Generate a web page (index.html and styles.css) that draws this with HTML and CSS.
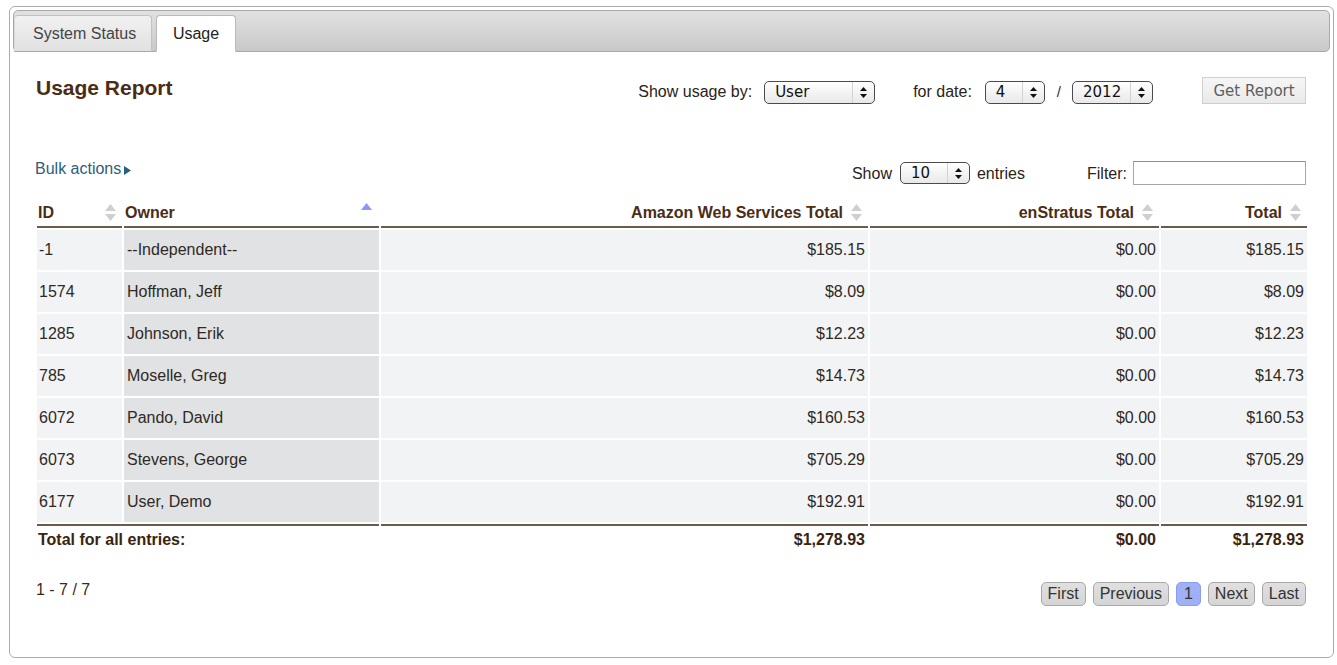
FILE: index.html
```html
<!DOCTYPE html>
<html>
<head>
<meta charset="utf-8">
<title>Usage Report</title>
<link rel="stylesheet" href="styles.css">
</head>
<body>
<div class="panel">
  <div class="tabbar">
    <div class="tab">System Status</div>
    <div class="tab active">Usage</div>
  </div>
  <div class="content">
    <div class="report-head">
      <h1 class="title">Usage Report</h1>
      <div class="controls">
        <span class="label">Show usage by:</span>
        <span class="select sel-user"><span class="val">User</span><span class="arrows"><svg width="7" height="11" viewBox="0 0 7 11"><path d="M3.5 0 L7 4 L0 4 Z M0 7 L7 7 L3.5 11 Z" fill="#111"/></svg></span></span>
        <span class="label label-date">for date:</span>
        <span class="select sel-month"><span class="val">4</span><span class="arrows"><svg width="7" height="11" viewBox="0 0 7 11"><path d="M3.5 0 L7 4 L0 4 Z M0 7 L7 7 L3.5 11 Z" fill="#111"/></svg></span></span>
        <span class="slash">/</span>
        <span class="select sel-year"><span class="val">2012</span><span class="arrows"><svg width="7" height="11" viewBox="0 0 7 11"><path d="M3.5 0 L7 4 L0 4 Z M0 7 L7 7 L3.5 11 Z" fill="#111"/></svg></span></span>
        <button class="get-report">Get Report</button>
      </div>
    </div>

    <div class="toolbar">
      <a class="bulk">Bulk actions<svg class="bulk-arrow" width="7" height="9" viewBox="0 0 7 9"><path d="M0 0 L7 4.5 L0 9 Z" fill="#2f5d7c"/></svg></a>
      <div class="toolbar-right">
        <span class="label">Show</span>
        <span class="select sel-len"><span class="val">10</span><span class="arrows"><svg width="7" height="11" viewBox="0 0 7 11"><path d="M3.5 0 L7 4 L0 4 Z M0 7 L7 7 L3.5 11 Z" fill="#111"/></svg></span></span>
        <span class="label label-entries">entries</span>
        <span class="label label-filter">Filter:</span>
        <span class="filter-input"></span>
      </div>
    </div>

    <table class="usage">
      <colgroup>
        <col class="c-id"><col class="c-owner"><col class="c-aws"><col class="c-ens"><col class="c-total">
      </colgroup>
      <thead>
        <tr>
          <th class="left">ID<svg class="sort" width="11" height="17" viewBox="0 0 11 17"><path d="M5.5 0 L11 7 L0 7 Z M0 10 L11 10 L5.5 17 Z" fill="#cfcfcf"/></svg></th>
          <th class="left">Owner<svg class="sort" width="11" height="17" viewBox="0 0 11 17"><path d="M5.5 0 L11 7 L0 7 Z" fill="#8c98f2"/></svg></th>
          <th class="right">Amazon Web Services Total<svg class="sort" width="11" height="17" viewBox="0 0 11 17"><path d="M5.5 0 L11 7 L0 7 Z M0 10 L11 10 L5.5 17 Z" fill="#cfcfcf"/></svg></th>
          <th class="right">enStratus Total<svg class="sort" width="11" height="17" viewBox="0 0 11 17"><path d="M5.5 0 L11 7 L0 7 Z M0 10 L11 10 L5.5 17 Z" fill="#cfcfcf"/></svg></th>
          <th class="right">Total<svg class="sort" width="11" height="17" viewBox="0 0 11 17"><path d="M5.5 0 L11 7 L0 7 Z M0 10 L11 10 L5.5 17 Z" fill="#cfcfcf"/></svg></th>
        </tr>
      </thead>
      <tbody>
        <tr><td>-1</td><td class="sorted">--Independent--</td><td class="num">$185.15</td><td class="num">$0.00</td><td class="num">$185.15</td></tr>
        <tr><td>1574</td><td class="sorted">Hoffman, Jeff</td><td class="num">$8.09</td><td class="num">$0.00</td><td class="num">$8.09</td></tr>
        <tr><td>1285</td><td class="sorted">Johnson, Erik</td><td class="num">$12.23</td><td class="num">$0.00</td><td class="num">$12.23</td></tr>
        <tr><td>785</td><td class="sorted">Moselle, Greg</td><td class="num">$14.73</td><td class="num">$0.00</td><td class="num">$14.73</td></tr>
        <tr><td>6072</td><td class="sorted">Pando, David</td><td class="num">$160.53</td><td class="num">$0.00</td><td class="num">$160.53</td></tr>
        <tr><td>6073</td><td class="sorted">Stevens, George</td><td class="num">$705.29</td><td class="num">$0.00</td><td class="num">$705.29</td></tr>
        <tr><td>6177</td><td class="sorted">User, Demo</td><td class="num">$192.91</td><td class="num">$0.00</td><td class="num">$192.91</td></tr>
      </tbody>
      <tfoot>
        <tr><td colspan="2">Total for all entries:</td><td class="num">$1,278.93</td><td class="num">$0.00</td><td class="num">$1,278.93</td></tr>
      </tfoot>
    </table>

    <div class="footer">
      <span class="info">1 - 7 / 7</span>
      <div class="pager">
        <span class="pbtn">First</span>
        <span class="pbtn">Previous</span>
        <span class="pbtn current">1</span>
        <span class="pbtn">Next</span>
        <span class="pbtn">Last</span>
      </div>
    </div>
  </div>
</div>
</body>
</html>
```

FILE: styles.css
```css
* { box-sizing: border-box; }
html, body { margin: 0; padding: 0; background: #fff; }
body {
  font-family: "Liberation Sans", Arial, sans-serif;
  font-size: 16px;
  color: #3a2d22;
}

.panel {
  margin: 6px 3px 0 9px;
  height: 652px;
  border: 1px solid #ababab;
  border-radius: 6px;
  padding: 3px;
}

.tabbar {
  height: 42px;
  border: 1px solid #a9a9a9;
  border-radius: 5px;
  background: linear-gradient(#e1e1e1, #c9c9c9);
  display: flex;
  align-items: flex-end;
  gap: 4px;
  padding: 0;
}
.tab {
  height: 37px;
  margin-bottom: -1px;
  padding: 0 18px;
  line-height: 36px;
  color: #444;
  background: linear-gradient(#f1f1f1, #e1e1e1);
  border: 1px solid #c2c2c2;
  border-bottom: 1px solid #a9a9a9;
  border-radius: 4px 4px 0 0;
  font-size: 16px;
  white-space: nowrap;
}
.tab:first-child { border-left-color: #d8d8d8; width: 138px; }
.tab.active {
  background: #fff;
  color: #222;
  border-color: #b9b9b9;
  border-bottom-color: #fff;
  width: 80px;
  padding: 0 10px;
  text-align: center;
}

.content {
  padding: 25px 21px 0 22px;
}

.report-head {
  display: flex;
  justify-content: space-between;
  align-items: flex-start;
  height: 27px;
}
.title {
  margin: 0 0 0 1px;
  font-size: 21px;
  font-weight: bold;
  line-height: 22px;
  color: #4a2d14;
}
.controls {
  display: flex;
  align-items: center;
  height: 27px;
  padding-right: 3px;
}
.label { color: #2b2219; }
.controls .label { margin-top: 2px; }
.controls > .select { margin-top: 4px; }
.controls > .slash { margin-top: 2px; }

.select {
  display: inline-flex;
  align-items: stretch;
  height: 23px;
  border: 1px solid #4a4a4a;
  border-radius: 5px;
  background: linear-gradient(#ffffff, #f1f1f1 60%, #e9e9e9);
  font-family: "DejaVu Sans", sans-serif;
  font-size: 15px;
  color: #111;
}
.select .val {
  flex: 1;
  padding-left: 10px;
  line-height: 21px;
}
.select .arrows {
  width: 22px;
  border-left: 1px solid #d2d2d2;
  display: flex;
  align-items: center;
  justify-content: center;
}
.sel-user { width: 111px; margin-left: 12px; }
.label-date { margin-left: 38px; }
.sel-month { width: 60px; margin-left: 13px; }
.slash { margin-left: 12px; font-size: 15px; color: #333; }
.sel-year { width: 81px; margin-left: 11px; }
.get-report {
  margin-left: 49px;
  width: 104px;
  height: 27px;
  border: 1px solid #cfcfcf;
  background: linear-gradient(#f6f6f6, #e9e9e9);
  color: #5e5e5e;
  font-family: "DejaVu Sans", sans-serif;
  font-size: 15px;
  padding: 0;
}

.toolbar {
  margin-top: 57px;
  display: flex;
  justify-content: space-between;
  align-items: center;
  height: 24px;
}
.bulk {
  color: #2f5d7c;
  display: flex;
  align-items: center;
  margin-top: -8px;
}
.bulk-arrow { margin-left: 3px; margin-top: 2px; }
.toolbar-right {
  display: flex;
  align-items: center;
  padding-right: 3px;
}
.toolbar-right .label { margin-top: 1px; }
.sel-len { width: 70px; margin-left: 8px; height: 22px; }
.sel-len .val { line-height: 20px; }
.label-entries { margin-left: 7px; }
.label-filter { margin-left: 62px; }
.filter-input {
  display: block;
  width: 173px;
  height: 24px;
  margin-left: 6px;
  border: 1px solid #a6a6a6;
  border-top-color: #8d8d8d;
  background: #fff;
}

.usage {
  margin-top: 12px;
  width: 100%;
  table-layout: fixed;
  border-collapse: separate;
  border-spacing: 2px;
}
.c-id { width: 85px; }
.c-owner { width: 255px; }
.c-aws { width: 487px; }
.c-ens { width: 289px; }
.c-total { width: 146px; }

.usage th {
  position: relative;
  font-weight: bold;
  color: #4a2d14;
  line-height: 18px;
  padding: 5px 3px 4px 1px;
  border-bottom: 2px solid #6b5b4d;
  white-space: nowrap;
}
.usage th.left { text-align: left; }
.usage th.right { text-align: right; padding-right: 25px; }
.usage th .sort {
  position: absolute;
  right: 6px;
  top: 5px;
}
.usage th:nth-child(2) .sort { right: 7px; top: 4px; }

.usage tbody td {
  height: 40px;
  padding: 0 3px 0 2px;
  background: #f2f3f5;
  color: #2f2923;
  line-height: 18px;
  vertical-align: middle;
}
.usage tbody td.sorted { background: #e1e2e4; padding-left: 3px; }
.usage td.num { text-align: right; padding-right: 3px; }

.usage tfoot td {
  border-top: 2px solid #6b5b4d;
  padding: 5px 3px 4px 1px;
  line-height: 18px;
  font-weight: bold;
  color: #3a2410;
}

.footer {
  margin-top: 27px;
  display: flex;
  justify-content: space-between;
  align-items: flex-start;
  padding-right: 3px;
}
.info { margin-left: 1px; line-height: 16px; color: #3a2a1c; }
.pager { display: flex; gap: 7px; }
.pbtn {
  height: 24px;
  line-height: 22px;
  padding: 0 6px;
  border: 1px solid #a8a8a8;
  border-radius: 5px;
  background: linear-gradient(#e0e0e0, #d5d5d5);
  color: #333;
}
.pbtn.current {
  background: #9fb0f7;
  border-color: #8a9cf0;
  padding: 0 7px;
}
```
